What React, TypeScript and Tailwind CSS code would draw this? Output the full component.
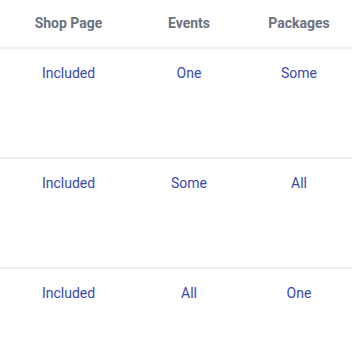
const rows = [
  { shop: 'Included', events: 'One', packages: 'Some' },
  { shop: 'Included', events: 'Some', packages: 'All' },
  { shop: 'Included', events: 'All', packages: 'One' },
];

const cols = 'grid grid-cols-[137px_104px_116px]';

export default function App() {
  return (
    <div className="w-[352px] h-[352px] overflow-hidden bg-white font-['Roboto',sans-serif]">
      <div className={`${cols} h-[49px] items-center border-b-2 border-[#eef0f5] pb-[2px] text-sm font-bold text-[#6b7280]`}>
        <div className="text-center">Shop Page</div>
        <div className="text-center">Events</div>
        <div className="text-center">Packages</div>
      </div>
      {rows.map((r, i) => (
        <div key={i} className={`${cols} h-[110px] border-b-2 border-[#eef0f5] pt-[14px] text-sm text-[#3949ab]`}>
          <div className="text-center">{r.shop}</div>
          <div className="text-center">{r.events}</div>
          <div className="text-center">{r.packages}</div>
        </div>
      ))}
    </div>
  );
}
